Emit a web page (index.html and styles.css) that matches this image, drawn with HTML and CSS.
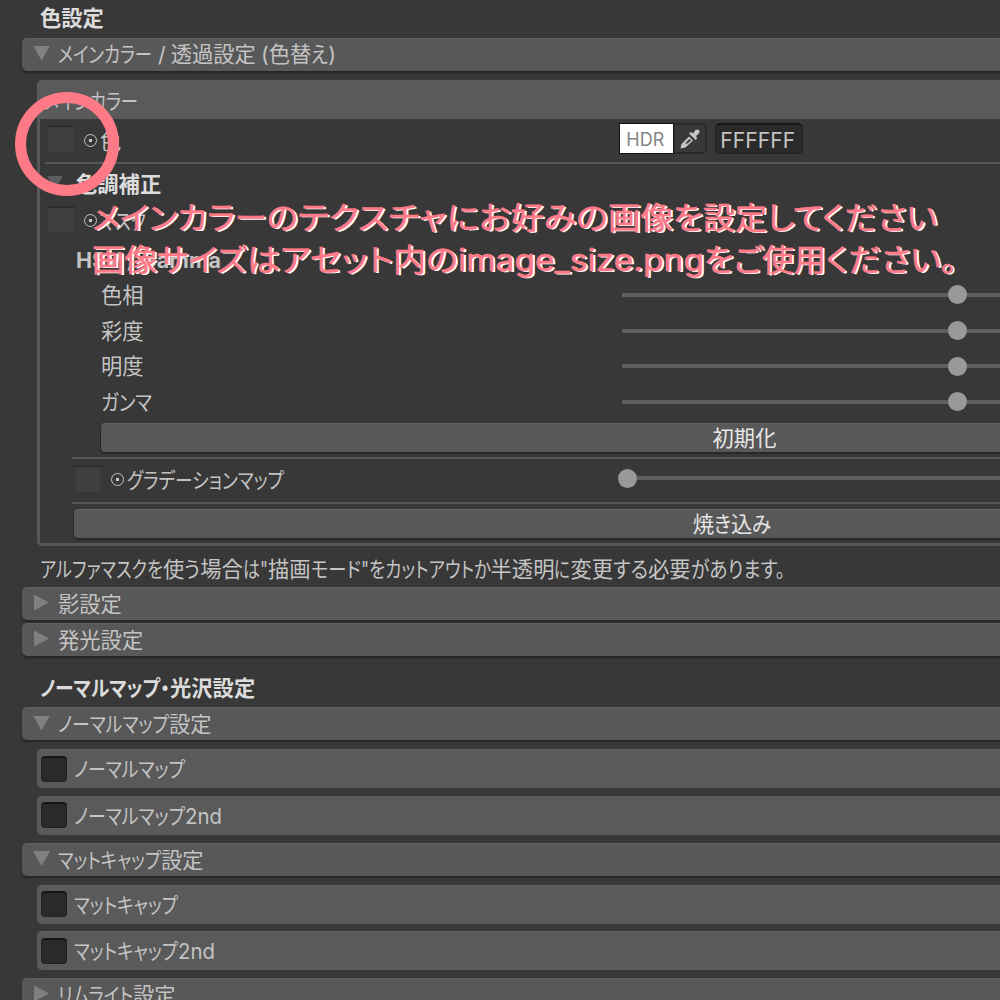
FILE: index.html
```html
<!DOCTYPE html>
<html lang="ja">
<head>
  <meta charset="UTF-8">
  <meta name="viewport" content="width=device-width, initial-scale=1.0">
  <title>色設定</title>
  <link rel="stylesheet" href="styles.css">
</head>
<body>

  <div class="inspector">
    <h2 class="title">色設定</h2>
    <div class="foldout main"><i class="arrow down"></i><span data-w="94">メインカラー</span><span class="slash">/</span><span>透過設定</span><span class="paren">(</span><span>色替</span><span data-w="17">え</span><span>)</span></div>

    <div class="box">
      <div class="box-head"><span data-w="94">メインカラー</span></div>
      <div class="row color-row">
        <i class="thumb"></i><i class="dot"></i><span>色</span>
        <div class="color-field">
          <span class="hdr">HDR</span>
          <span class="picker">
            <svg width="22" height="22" viewBox="0 0 22 22">
              <path d="M1.500 20.500l1-4.500 7.500-7.500 4 4-7.500 7z" fill="#c4c4c4"/>
              <path d="M6 15.500l4.500-4.500 1.500 1.500-3.500 3z" fill="#383838"/>
              <path d="M10 5.500l2-1.500 2 1.500 2.500-3.500q2-1.300 3.500.2 1.200 1.500 0 3.300l-3 2.500 1.200 2-1.500 2z" fill="#c4c4c4"/>
            </svg>
          </span>
          <span class="hex">FFFFFF</span>
        </div>
      </div>
      <div class="line"></div>
      <div class="row sub-title"><i class="arrow down small"></i><b>色調補正</b></div>
      <div class="row mask-row"><i class="thumb"></i><i class="dot"></i><span data-w="46">マスク</span></div>
      <div class="row hsv-title"><b data-w="145">HSV / Gamma</b></div>
      <div class="row slider-row"><span class="name">色相</span><div class="slider"><i class="knob"></i></div></div>
      <div class="row slider-row"><span class="name">彩度</span><div class="slider"><i class="knob"></i></div></div>
      <div class="row slider-row"><span class="name">明度</span><div class="slider"><i class="knob"></i></div></div>
      <div class="row slider-row"><span class="name"><span data-w="51">ガンマ</span></span><div class="slider"><i class="knob"></i></div></div>
      <button class="btn reset">初期化</button>
      <div class="line inner"></div>
      <div class="row gradient-row">
        <div class="name"><i class="thumb"></i><i class="dot"></i><span data-w="157">グラデーションマップ</span></div>
        <div class="slider"><i class="knob start"></i></div>
      </div>
      <div class="line inner"></div>
      <button class="btn bake"><span>焼</span><span data-w="17">き</span><span>込</span><span data-w="19">み</span></button>
    </div>

    <p class="note"><span data-w="123">アルファマスクを</span><span>使</span><span data-w="16">う</span><span>場合</span><span data-w="17">は</span><span data-w="8">"</span><span>描画</span><span data-w="50">モード</span><span data-w="8">"</span><span data-w="122">をカットアウトか</span><span>半透明</span><span data-w="16">に</span><span>変更</span><span data-w="35">する</span><span>必要</span><span data-w="94">があります。</span></p>

    <div class="foldout"><i class="arrow"></i><span>影設定</span></div>
    <div class="foldout second"><i class="arrow"></i><span>発光設定</span></div>

    <h2 class="title normal"><span data-w="120">ノーマルマップ</span><span data-w="10">・</span><span>光沢設定</span></h2>
    <div class="foldout"><i class="arrow down"></i><span data-w="111">ノーマルマップ</span><span>設定</span></div>
    <div class="toggle first"><i class="check"></i><span data-w="111">ノーマルマップ</span></div>
    <div class="toggle"><i class="check"></i><span data-w="111">ノーマルマップ</span><span data-w="37">2nd</span></div>
    <div class="foldout"><i class="arrow down"></i><span data-w="103">マットキャップ</span><span>設定</span></div>
    <div class="toggle first"><i class="check"></i><span data-w="104">マットキャップ</span></div>
    <div class="toggle"><i class="check"></i><span data-w="104">マットキャップ</span><span data-w="37">2nd</span></div>
    <div class="foldout"><i class="arrow"></i><span data-w="75">リムライト</span><span>設定</span></div>
  </div>

  <div class="ring"></div>
  <div class="callout">
    <p><span data-w="206">メインカラーの</span><span data-w="181">テクスチャに</span><span data-w="129">お好みの</span><span data-w="95">画像を</span><span data-w="64">設定</span><span data-w="170">してください</span></p>
    <p><span data-w="65">画像</span><span data-w="301">サイズはアセット内の</span><span class="latin" data-w="246">image_size.png</span><span data-w="58">をご</span><span data-w="64">使用</span><span data-w="131">ください。</span></p>
  </div>

  <script>
    // squeeze each run of text to its set width
    document.querySelectorAll("[data-w]").forEach(function (el) {
      const width = Number(el.dataset.w);
      const natural = el.getBoundingClientRect().width;
      el.style.transform = "scaleX(" + width / natural + ")";
      el.style.marginRight = (width - natural) + "px";
    });
  </script>

</body>
</html>
```
FILE: styles.css
```css
* {
  box-sizing: border-box;
}

body {
  margin: 0;
  width: 1000px;
  height: 1000px;
  overflow: hidden;
  position: relative;
  background-color: #383838;
  color: #c4c4c4;
  font-family: Inter, "Noto Sans CJK JP", sans-serif;
  font-size: 21.3px;
  line-height: 30px;
  white-space: nowrap;
}

/* wider than the window, cut off on the right */
.inspector {
  width: 1400px;
  padding-left: 22px;
}

[data-w] {
  display: inline-block;
  flex: none;
  transform-origin: 0 50%;
  font-feature-settings: "palt";
}

.title {
  display: flex;
  align-items: center;
  height: 38px;
  margin: 0;
  padding: 0 0 2px 18px;
  font-size: 21.3px;
  font-weight: bold;
  color: #dcdcdc;
}

.title.normal {
  height: 36px;
  margin: 14px 0 1px;
  padding-bottom: 0;
}

.foldout {
  display: flex;
  align-items: center;
  height: 33px;
  padding-left: 10px;
  border-radius: 5px;
  border-top: 1px solid #606060;
  background-color: #585858;
  box-shadow: 0 2px 2px #252525;
}

.foldout.main {
  padding-bottom: 2px;
}

.foldout.second {
  margin-top: 3px;
}

.slash {
  margin: 0 5px 0 6px;
}

.paren {
  margin-left: 5px;
}

.arrow {
  flex: none;
  width: 15px;
  height: 16px;
  margin: 0 9px 3px 2px;
  background-color: #808080;
  clip-path: polygon(0 0, 100% 50%, 0 100%);
}

.arrow.down {
  width: 17px;
  height: 15px;
  margin: 0 8px 2px 1px;
  clip-path: polygon(0 0, 100% 0, 50% 100%);
}

.arrow.small {
  width: 16px;
  background-color: #5e5e5e;
}

.box {
  height: 466px;
  margin: 9px 10px 0 15px;
  border: 3px solid #585858;
  border-radius: 5px;
}

.box-head {
  display: flex;
  align-items: center;
  height: 39px;
  margin: -3px -3px 0;
  padding: 2px 0 0 7px;
  border-radius: 5px 5px 0 0;
  background-color: #5a5a5a;
}

.row {
  display: flex;
  align-items: center;
}

.line {
  height: 2px;
  margin-left: 5px;
  background-color: #585858;
}

.line.inner {
  margin-left: 32px;
}

.thumb {
  flex: none;
  width: 28px;
  height: 28px;
  margin: 0 9px 3px 0;
  border: 1px solid #353535;
  border-top: 2px solid #2e2e2e;
  background-color: #3e3e3e;
}

.dot {
  flex: none;
  width: 13px;
  height: 13px;
  margin: 0 3px 1px 0;
  border: 1.5px solid #c4c4c4;
  border-radius: 50%;
  background: radial-gradient(circle, #c4c4c4 1.5px, transparent 2px);
}

.color-row {
  height: 43px;
  padding-left: 7px;
}

.color-field {
  display: flex;
  width: 780px;
  height: 31px;
  margin: -4px 0 0 498px;
}

.hdr {
  width: 55px;
  padding-left: 6px;
  border: 1px solid #151515;
  background-color: #fff;
  color: #858585;
  font-size: 18px;
  line-height: 31px;
}

.picker {
  display: flex;
  align-items: center;
  justify-content: center;
  width: 33px;
  margin-right: 8px;
  border: 2px solid #282828;
  border-left-width: 1px;
  border-radius: 0 5px 5px 0;
}

.hex {
  width: 88px;
  padding-left: 4px;
  border: 1px solid #212121;
  border-top: 2px solid #151515;
  border-radius: 5px;
  background-color: #2a2a2a;
  font-size: 21.2px;
}

.sub-title {
  height: 39px;
  padding: 1px 0 0 6px;
}

.sub-title b {
  margin-left: 5px;
  color: #dcdcdc;
}

.mask-row {
  height: 36px;
  padding-left: 7px;
}

.hsv-title {
  height: 38px;
  padding: 3px 0 0 36px;
}

.slider-row {
  height: 35.7px;
  padding-left: 61px;
}

.slider-row .name {
  width: 521px;
}

.slider {
  display: flex;
  align-items: center;
  width: 760px;
  height: 4px;
  background-color: #5e5e5e;
}

.knob {
  flex: none;
  width: 19px;
  height: 19px;
  margin-left: 326px;
  border-radius: 50%;
  background-color: #999;
}

.knob.start {
  margin-left: -4px;
}

.btn {
  display: flex;
  align-items: center;
  justify-content: center;
  height: 29px;
  padding: 0;
  border: none;
  border-top: 1px solid #666;
  border-radius: 4px;
  background-color: #585858;
  box-shadow: 0 1px 1px 1px #282828;
  color: #e6e6e6;
  font: inherit;
}

.reset {
  width: 1287px;
  margin: 3px 0 5px 61px;
}

.gradient-row {
  height: 43px;
  padding-left: 34px;
}

.gradient-row .name {
  display: flex;
  align-items: center;
  width: 548px;
}

.gradient-row .slider {
  margin-bottom: 4px;
}

.bake {
  width: 1316px;
  margin: 5px 0 0 34px;
}

.note {
  display: flex;
  align-items: center;
  height: 41px;
  margin: 0;
  padding: 4px 0 0 18px;
}

.toggle {
  display: flex;
  align-items: center;
  height: 39px;
  margin: 0 0 8px 15px;
  padding-left: 4px;
  border-radius: 5px;
  border-top: 1px solid #606060;
  background-color: #5a5a5a;
}

.toggle.first {
  margin: 9px 0 7.5px 15px;
}

.check {
  flex: none;
  width: 26px;
  height: 26px;
  margin: 0 7px 1px 0;
  border: 1px solid #222;
  border-top: 2px solid #151515;
  border-radius: 4px;
  background-color: #2a2a2a;
}

/* annotations over the panel */
.ring {
  position: absolute;
  left: 15px;
  top: 92px;
  width: 104px;
  height: 104px;
  border: 11px solid #ff7a87;
  border-radius: 50%;
}

.callout {
  position: absolute;
  left: 92px;
  top: 197px;
  color: #ff7a87;
  font-size: 30.5px;
  font-weight: 400;
  line-height: 42px;
  text-shadow: 2px 1px 0 #fff;
  -webkit-text-stroke: 0.6px #ff7a87;
}

.callout p {
  display: flex;
  margin: 0;
}

.latin {
  font-size: 30px;
}
```
